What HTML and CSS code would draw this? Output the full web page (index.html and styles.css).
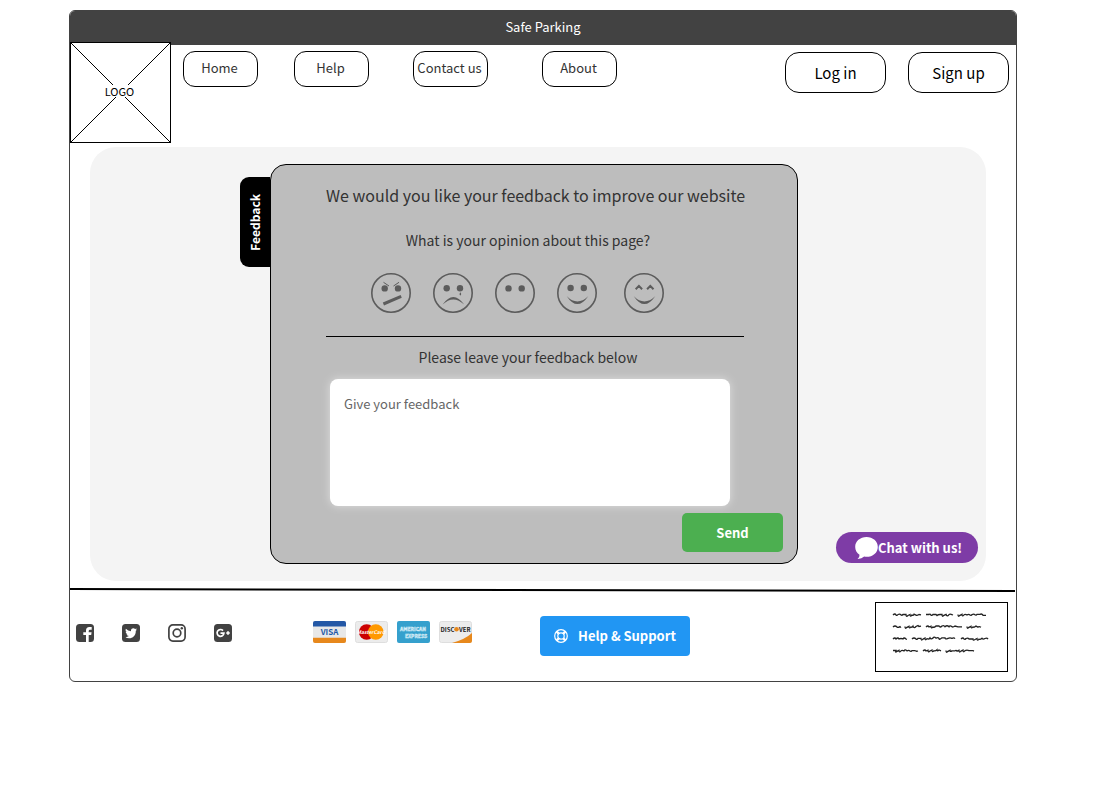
FILE: index.html
```html
<!DOCTYPE html>
<html lang="en">
<head>
<meta charset="utf-8">
<title>Safe Parking</title>
<link rel="stylesheet" href="styles.css">
</head>
<body>
<div class="window">
  <div class="titlebar">Safe Parking</div>

  <header class="header">
    <a class="logo" href="#">
      <svg class="logo-cross" viewBox="0 0 99 99" preserveAspectRatio="none" aria-hidden="true"><path d="M0 0L99 99M99 0L0 99"/></svg>
      <span class="logo-text">LOGO</span>
    </a>
    <nav class="nav">
      <button class="nav-button" type="button">Home</button>
      <button class="nav-button" type="button">Help</button>
      <button class="nav-button" type="button">Contact us</button>
      <button class="nav-button" type="button">About</button>
    </nav>
    <div class="account">
      <button class="account-button" type="button">Log in</button>
      <button class="account-button" type="button">Sign up</button>
    </div>
  </header>

  <main class="panel">
    <button class="tab" type="button"><span class="tab-text">Feedback</span></button>
    <form class="card">
      <h1 class="card-title">We would you like your feedback to improve our website</h1>
      <div class="card-body">
        <p class="question">What is your opinion about this page?</p>
        <div class="faces">
          <button class="face" type="button" aria-label="Angry">
            <svg viewBox="0 0 40 40"><circle class="ring" cx="20" cy="20" r="19.2"/><circle cx="13.7" cy="15.4" r="3.2"/><circle cx="27" cy="15.4" r="3.2"/><path class="brow" d="M12.5 9.3L18 13M28 9.3L22.5 13"/><path class="mouth" d="M12.4 31L30.2 23.4"/></svg>
          </button>
          <button class="face" type="button" aria-label="Sad">
            <svg viewBox="0 0 40 40"><circle class="ring" cx="20" cy="20" r="19.2"/><circle cx="13.7" cy="15.2" r="3.2"/><circle cx="27" cy="15.2" r="3.2"/><path d="M27.4 19.3q1.500 2.400 0 3.200q-1.700-.8 0-3.200z"/><path d="M9.600 31.600Q20.300 16.400 31.200 31.600Q20.300 21.200 9.600 31.600z"/></svg>
          </button>
          <button class="face" type="button" aria-label="Neutral">
            <svg viewBox="0 0 40 40"><circle class="ring" cx="20" cy="20" r="19.2"/><circle cx="13.5" cy="15.4" r="3.2"/><circle cx="26.7" cy="15.4" r="3.2"/></svg>
          </button>
          <button class="face" type="button" aria-label="Happy">
            <svg viewBox="0 0 40 40"><circle class="ring" cx="20" cy="20" r="19.2"/><circle cx="13.6" cy="15" r="3.2"/><circle cx="26.8" cy="15" r="3.2"/><path d="M9.800 23.200Q20.300 39 31.200 23.200Q20.300 33.600 9.800 23.200z"/></svg>
          </button>
          <button class="face face-last" type="button" aria-label="Very happy">
            <svg viewBox="0 0 40 40"><circle class="ring" cx="20" cy="20" r="19.2"/><path class="eye" d="M11.700 16.300L14.900 12.900L18.100 16.300M23.100 16.300L26.300 12.900L29.500 16.300"/><path d="M9.800 23.200Q20.300 39 31.200 23.200Q20.300 33.600 9.800 23.200z"/></svg>
          </button>
        </div>
        <hr class="divider">
        <label class="question" for="feedback">Please leave your feedback below</label>
        <textarea class="feedback" id="feedback" placeholder="Give your feedback"></textarea>
      </div>
      <button class="send" type="button">Send</button>
    </form>
    <button class="chat" type="button">
      <svg class="chat-icon" viewBox="0 0 23 22" aria-hidden="true"><path d="M11.500 0C17.900 0 22.800 4.200 22.800 9.900S17.900 19.800 11.500 19.800Q10.300 19.800 9.200 19.500Q6.600 22 2.600 21.900Q4.800 19.900 4.500 17.700C1.800 15.900 .2 13.200 .2 9.900C.2 4.200 5.100 0 11.500 0z"/></svg>
      Chat with us!
    </button>
  </main>

  <svg class="rule" viewBox="0 0 946 5" preserveAspectRatio="none" aria-hidden="true"><path d="M0 1L946 3"/></svg>

  <footer class="footer">
    <div class="social">
      <a href="#" aria-label="Facebook"><svg viewBox="0 0 18 18"><rect width="18" height="18" rx="3.500"/><path class="cut" d="M10 18V11H7.300V8.300H10V6.600Q10 3 13.400 3H15.700V5.700H14Q12.700 5.700 12.700 7V8.300H15.600L15.200 11H12.700V18z"/></svg></a>
      <a href="#" aria-label="Twitter"><svg viewBox="0 0 18 18"><rect width="18" height="18" rx="3.500"/><path class="cut" d="M15 5.400Q14.300 5.700 13.600 5.800Q14.400 5.300 14.700 4.500Q13.900 4.900 13.100 5.100C11.400 3.300 8.500 4.800 9 7.300Q6 7.200 3.900 4.800C3.200 6.100 3.700 7.400 4.700 8.100Q4.100 8.100 3.600 7.800Q3.700 9.700 5.500 10.300Q5 10.400 4.500 10.300Q5 11.900 6.900 12Q5.200 13.300 3 13.100C8 16.300 14 13.100 13.800 6.700Q14.500 6.200 15 5.400z"/></svg></a>
      <a href="#" aria-label="Instagram"><svg viewBox="0 0 18 18"><rect class="line" x=".9" y=".9" width="16.200" height="16.200" rx="4"/><circle class="line" cx="9" cy="9" r="3.800"/><circle cx="13.800" cy="4.200" r="1.200"/></svg></a>
      <a href="#" aria-label="Google Plus"><svg viewBox="0 0 18 18"><rect width="18" height="18" rx="3.500"/><path class="cut-line" d="M9 6.600A3.400 3.400 0 1 0 9.900 9.200H6.500"/><path class="cut-line" d="M14 7.200V10.800M12.200 9H15.800"/></svg></a>
    </div>

    <div class="payments">
      <svg class="pay" viewBox="0 0 33 22" role="img" aria-label="Visa"><rect width="33" height="22" rx="2" fill="#e8e8e8"/><path d="M0 5.500V2Q0 0 2 0H31Q33 0 33 2V5.500z" fill="#2458a6"/><path d="M0 16.800V20Q0 22 2 22H31Q33 22 33 20V16.800z" fill="#e7881c"/><text class="visa" x="16.500" y="14.200">VISA</text></svg>
      <svg class="pay" viewBox="0 0 33 22" role="img" aria-label="MasterCard"><rect x=".5" y=".5" width="32" height="21" rx="2" fill="#ececec" stroke="#dedede"/><circle cx="11.700" cy="11" r="7.800" fill="#c00"/><circle cx="20.800" cy="11" r="7.800" fill="#f90"/><text class="master" x="16" y="12.800">MasterCard</text></svg>
      <svg class="pay" viewBox="0 0 33 22" role="img" aria-label="American Express"><rect width="33" height="22" rx="2" fill="#35a0cd"/><text class="amex" x="16" y="9.500">AMERICAN</text><text class="amex" x="19" y="17">EXPRESS</text></svg>
      <svg class="pay" viewBox="0 0 33 22" role="img" aria-label="Discover"><rect x=".5" y=".5" width="32" height="21" rx="2" fill="#ececec" stroke="#dedede"/><path d="M13 21.900Q26 18.500 33 12V20Q33 21.900 31 21.900z" fill="#e7881c"/><text class="discover" x="1.500" y="10.500">DISC</text><circle cx="17.500" cy="8.300" r="2.300" fill="#e7881c"/><text class="discover" x="20" y="10.500">VER</text></svg>
    </div>

    <button class="support" type="button">
      <svg class="support-icon" viewBox="0 0 14 14" aria-hidden="true"><circle cx="7" cy="7" r="6.300"/><circle cx="7" cy="7" r="3.200"/><path class="thick" d="M2.700 2.700L4.700 4.700M11.300 2.700L9.300 4.700M2.700 11.300L4.700 9.300M11.300 11.300L9.300 9.300"/></svg>
      Help &amp; Support
    </button>

    <div class="note">
      <svg class="scribble" viewBox="0 0 98 42" aria-hidden="true">
        <path d="M1 3q2-2 3 0q1 1 2-.5q2-1 3 .5q1 .6 2-.5h3q0 3 2 1l2-1q0 3 2 0.500q1 1 2-.8l2 .9q1 .6 3-.6l2 .4"/>
        <path d="M34 2.500h3q1-1 2 .7q1 .6 2-.7h3l1 1q1-1 3-1h2q0 3 2 .8l2-1q1 3 3 .3q1-1 3 0l1 .4"/>
        <path d="M66 2.500q0 3 2 .8l2-1q0 3 2 .6q1-1 3 0q2-1 3 .2q1 .8 2-.5q2-1 3 .2q1 .8 2-.5h3q2-1 3 1h3"/>
        <path d="M1 15q2-2 4 0q1 1 3-.4l1 1"/>
        <path d="M13 14.500q0 3 2 .8l2-1q0 3 2 .6q1 1 2-.8q1 3 3 .4l2-1 1 1 2-.4"/>
        <path d="M34 15q2-2 3 0l2-.8q0 3 2 .8q1 1 3-1h3q1 2 3 0q2-1 3 .8q2-2 4 0q1-2 3 0q1 .6 3-.8l3 .8h4"/>
        <path d="M75 14.500q0 3 2 .8l2-1q0 3 2 .6q1 1 3-.8l2 1q1-1 3 .2"/>
        <path d="M1 27q2-2 3 0q2-2 3 0q2-1 4 0q1-2 3 0l1 .3"/>
        <path d="M20 27q2-2 4 0q1 1 2-.7h3q0 3 2 .8l2-1q0 3 2 .6q2 1 3-.8q1 2 3 .2q1-2 3 0q2-1 3 .3q0 2 3-.6h3q0 2 3 0.500q2-1 4 0q2-1 3 .3"/>
        <path d="M69 27q2-2 3 0q1 .8 2-.5q2-1 3 .5h4q0 2 2 .5l2-1q0 3 2 .6q1 1 3-.8q1 1.500 3 .2q2-1 3 .6"/>
        <path d="M1 38.500h3q-1 3 1 .8l2-1q0 3 2 .6q1-1 3 0q1-2 3 0q2-1 3 .2q1 .8 2-.5h3q1 1 3 .4"/>
        <path d="M31 39q2-2 3 0l2-.8q0 3 2 .8l2-1q0 3 2 .6q1 1 3-.8q0 2 2 .2l2 .8"/>
        <path d="M54 38.500q0 3 2 .8l2-1q0 2 2 .6h3q1-1 2 .2l2-.8q0 3 2 .8l2-1q0 3 2 .6q2-1 4 0h4l1 .4"/>
      </svg>
    </div>
  </footer>
</div>
</body>
</html>
```
FILE: styles.css
```css
* {
  box-sizing: border-box;
}

body {
  margin: 0;
  padding: 10px 91px 24px 69px;
  background: #fff;
  color: #333;
  font-family: "Noto Sans CJK SC", "Noto Sans", sans-serif;
  font-size: 13px;
  line-height: 20px;
}

button {
  padding: 0;
  border: 0;
  background: none;
  color: inherit;
  font: inherit;
  cursor: pointer;
}

a {
  color: inherit;
  text-decoration: none;
}

svg {
  display: block;
}

.window {
  border: 1px solid #424242;
  border-radius: 6px;
  overflow: hidden;
}

.titlebar {
  padding: 6px 0 8px;
  background: #424242;
  color: #fff;
  text-align: center;
}

/* Header */

.header {
  display: flex;
  align-items: flex-start;
  padding-right: 7px;
}

.logo {
  display: grid;
  place-items: center;
  width: 101px;
  height: 101px;
  margin-top: -3px;
  border: 1px solid #000;
  background: #fff;
  color: #000;
  font-size: 11px;
  line-height: 12px;
}

.logo-cross,
.logo-text {
  grid-area: 1 / 1;
}

.logo-cross {
  width: 100%;
  height: 100%;
  stroke: #000;
  stroke-width: 1;
}

.logo-text {
  margin: 0 2px 3px 0;
  background: #fff;
}

.nav {
  display: grid;
  grid-template-columns: 111px 119px 129px 75px;
  padding: 6px 0 0 12px;
}

.nav-button {
  width: 75px;
  height: 36px;
  padding: 0 2px 2px 0;
  border: 1px solid #000;
  border-radius: 12px;
  white-space: nowrap;
}

.account {
  display: flex;
  gap: 22px;
  margin-left: auto;
  padding-top: 7px;
}

.account-button {
  width: 101px;
  height: 41px;
  border: 1px solid #000;
  border-radius: 14px;
  color: #000;
  font-size: 15px;
}

/* Main panel */

.panel {
  display: grid;
  grid-template-columns: 150fr 30px 528px 188fr;
  align-items: start;
  margin: 4px 30px 7px 20px;
  padding: 17px 0;
  border-radius: 26px;
  background: #f4f4f4;
}

.tab {
  grid-column: 2;
  display: grid;
  place-items: center;
  height: 90px;
  margin-top: 13px;
  border-radius: 9px 0 0 9px;
  background: #000;
  color: #fff;
  font-size: 12px;
  font-weight: 700;
}

.tab-text {
  writing-mode: vertical-rl;
  transform: rotate(180deg);
}

.card {
  display: flex;
  flex-direction: column;
  padding: 18px 14px 11px 55px;
  border: 1px solid #000;
  border-radius: 16px;
  background: #bdbdbd;
}

.card-title {
  margin: 0 41px 0 0;
  font-size: 16px;
  font-weight: 400;
  line-height: 24px;
  text-align: center;
  white-space: nowrap;
}

.card-body {
  display: flex;
  flex-direction: column;
  width: 404px;
  padding-top: 21px;
}

.question {
  margin: 0;
  font-size: 14px;
  line-height: 24px;
  text-align: center;
}

.faces {
  display: flex;
  gap: 22px;
  padding: 21px 0 23px 45px;
}

.face {
  width: 40px;
  height: 40px;
  fill: #5c5c5c;
  stroke: none;
}

.face-last {
  margin-left: 5px;
}

.ring,
.brow,
.mouth,
.eye {
  fill: none;
  stroke: #5c5c5c;
}

.ring {
  stroke-width: 1.6px;
}

.brow {
  stroke-width: 1px;
}

.mouth {
  stroke-width: 3px;
}

.eye {
  stroke-width: 2px;
}

.divider {
  width: 418px;
  margin: 0 0 8px;
  border: 0;
  border-top: 1px solid #000;
}

.feedback {
  height: 127px;
  margin: 10px 0 7px 4px;
  padding: 15px 14px;
  border: 0;
  border-radius: 8px;
  background: #fff;
  box-shadow: 0 0 10px rgba(255, 255, 255, 0.5);
  color: #333;
  font: inherit;
  resize: none;
}

.feedback::placeholder {
  color: #666;
  opacity: 1;
}

.send {
  align-self: flex-end;
  width: 101px;
  height: 39px;
  border-radius: 5px;
  background: #4caf50;
  color: #fff;
  font-weight: 700;
}

.chat {
  display: flex;
  align-items: center;
  align-self: end;
  justify-self: end;
  width: 142px;
  height: 31px;
  margin: 0 8px 1px 0;
  padding-left: 19px;
  border-radius: 16px;
  background: #7e3ca6;
  color: #fff;
  font-weight: 700;
  white-space: nowrap;
}

.chat-icon {
  width: 23px;
  height: 22px;
  fill: #fff;
}

/* Footer */

.rule {
  width: 100%;
  height: 5px;
  padding-right: 1px;
  stroke: #000;
  stroke-width: 2px;
}

.footer {
  display: flex;
  align-items: center;
  padding: 9px 8px 9px 6px;
}

.social {
  display: flex;
  gap: 28px;
  margin-bottom: 8px;
  fill: #424242;
}

.social svg {
  width: 18px;
  height: 18px;
}

.cut {
  fill: #fff;
}

.line,
.cut-line {
  fill: none;
  stroke: #424242;
  stroke-width: 1.7px;
}

.cut-line {
  stroke: #fff;
}

.payments {
  display: flex;
  gap: 9px;
  margin: 0 68px 10px 81px;
}

.pay {
  width: 33px;
  height: 22px;
}

.visa,
.master,
.amex {
  text-anchor: middle;
  font-weight: 700;
}

.visa {
  fill: #2458a6;
  font-size: 8px;
}

.master {
  fill: #fff;
  font-size: 5px;
  font-style: italic;
}

.amex {
  fill: none;
  stroke: #d8eef7;
  stroke-width: 0.5px;
  font-size: 5px;
}

.discover {
  fill: #222;
  font-size: 6px;
  font-weight: 700;
}

.support {
  display: flex;
  align-items: center;
  justify-content: center;
  gap: 10px;
  width: 150px;
  height: 40px;
  margin-bottom: 2px;
  border-radius: 4px;
  background: #2196f3;
  color: #fff;
  font-weight: 700;
}

.support-icon {
  width: 14px;
  height: 14px;
  fill: none;
  stroke: #fff;
  stroke-width: 1.2px;
}

.thick {
  stroke-width: 2.4px;
}

.note {
  width: 133px;
  height: 70px;
  margin-left: auto;
  padding: 9px 16px;
  border: 1px solid #000;
}

.scribble {
  width: 98px;
  height: 42px;
  fill: none;
  stroke: #222;
  stroke-width: 1.3px;
}
```
